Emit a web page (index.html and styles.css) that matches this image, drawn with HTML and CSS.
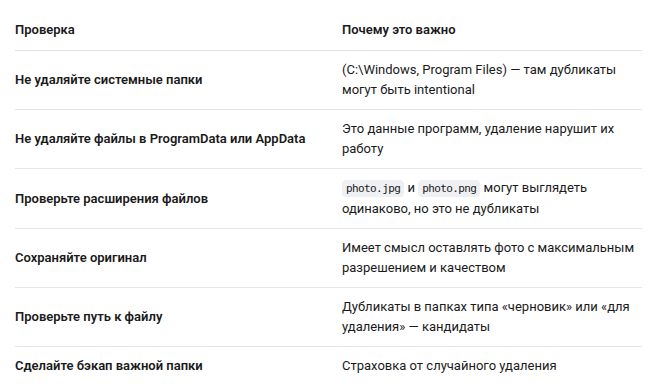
FILE: index.html
```html
<!DOCTYPE html>
<html lang="ru">
<head>
<meta charset="utf-8">
<link rel="stylesheet" href="styles.css">
</head>
<body>
<table class="tbl">
  <thead>
    <tr><th>Проверка</th><th>Почему это важно</th></tr>
  </thead>
  <tbody>
    <tr><td>Не удаляйте системные папки</td><td>(C:\Windows, Program Files) — там дубликаты могут быть intentional</td></tr>
    <tr><td>Не удаляйте файлы в ProgramData или AppData</td><td>Это данные программ, удаление нарушит их работу</td></tr>
    <tr><td>Проверьте расширения файлов</td><td><code class="code">photo.jpg</code> и <code class="code">photo.png</code> могут выглядеть одинаково, но это не дубликаты</td></tr>
    <tr><td>Сохраняйте оригинал</td><td>Имеет смысл оставлять фото с максимальным разрешением и качеством</td></tr>
    <tr><td>Проверьте путь к файлу</td><td>Дубликаты в папках типа «черновик» или «для удаления» — кандидаты</td></tr>
    <tr><td>Сделайте бэкап важной папки</td><td>Страховка от случайного удаления</td></tr>
  </tbody>
</table>
</body>
</html>
```
FILE: styles.css
```css
html, body { margin: 0; padding: 0; background: #fff; }
body { padding: 10px 7px 0 15px; font-family: "Segoe UI", Roboto, "Noto Sans", sans-serif; color: #1a1a1a; font-size: 13px; }
.tbl { width: 627px; border-collapse: collapse; table-layout: fixed; }
.tbl th, .tbl td { text-align: left; vertical-align: middle; line-height: 20px; padding: 9px 12px 9px 0; }
.tbl th { font-weight: 600; padding-top: 10px; padding-bottom: 10px; border-bottom: 1px solid #e2e2e2; }
.tbl td { border-bottom: 1px solid #e6e6e6; }
.tbl th:first-child, .tbl td:first-child { width: 303px; font-weight: 600; }
.tbl th:last-child, .tbl td:last-child { padding-left: 12px; padding-right: 0; }
.tbl tr:last-child td { border-bottom: none; }
.code { font-family: "DejaVu Sans Mono", "Liberation Mono", monospace; font-size: 11px; letter-spacing: -0.6px; background: #eef0f4; border-radius: 4px; padding: 2px 4px; }
```
